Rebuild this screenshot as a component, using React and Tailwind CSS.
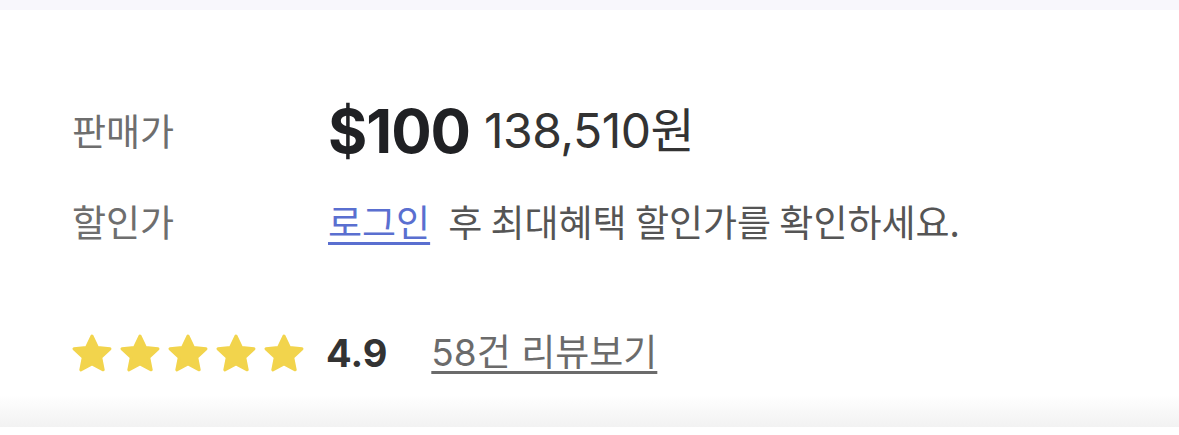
import React from "react";

const Star = () => (
  <svg width="40" height="38" viewBox="1.2 1.4 21.6 20.4" className="shrink-0">
    <path
      d="M12 2.4l2.95 6.15 6.75.8-4.95 4.65 1.3 6.7L12 17.45 5.95 20.7l1.3-6.7L2.3 9.35l6.75-.8z"
      fill="#F2D44C"
      stroke="#F2D44C"
      strokeWidth="1.6"
      strokeLinejoin="round"
    />
  </svg>
);

export default function App() {
  const kr = { fontFamily: '"Noto Sans CJK KR", "Noto Sans", sans-serif' };
  const num = { fontFamily: 'Inter, "Noto Sans CJK KR", sans-serif' };
  return (
    <div className="w-[1179px] h-[435px] bg-white flex flex-col overflow-hidden" style={kr}>
      <div className="h-[10px] bg-[#f8f7fc] shrink-0" />
      <div className="flex flex-col pl-[72px] pt-[91px]">
        <div className="flex items-center h-[60px]">
          <div className="w-[256px] text-[37px] text-[#6e6e6e]">판매가</div>
          <div className="flex items-center gap-[14px]" style={num}>
            <span className="text-[60px] font-bold text-[#202124] tracking-[-1px]">$100</span>
            <span className="text-[48px] text-[#333333] tracking-[-0.5px]">138,510원</span>
          </div>
        </div>
        <div className="flex items-center h-[60px] mt-[31px]">
          <div className="w-[256px] text-[37px] text-[#6e6e6e]">할인가</div>
          <div className="flex items-center text-[37px] text-[#555555]">
            <span className="text-[#5a6fd0] underline decoration-[3px] underline-offset-[5px]">로그인</span>
            <span className="ml-[18px]">후 최대혜택 할인가를 확인하세요.</span>
          </div>
        </div>
        <div className="flex items-center h-[60px] mt-[71px]">
          <div className="flex items-center gap-[8px]">
            <Star />
            <Star />
            <Star />
            <Star />
            <Star />
          </div>
          <span className="ml-[22px] text-[38px] font-bold text-[#333333]" style={num}>4.9</span>
          <span
            className="ml-[44px] text-[37px] text-[#6b6b6b] underline decoration-[3px] underline-offset-[5px]"
            style={num}
          >
            58건 리뷰보기
          </span>
        </div>
      </div>
      <div className="mt-auto h-[32px] bg-gradient-to-b from-white to-[#f2f2f2] shrink-0" />
      <div className="h-[8px] bg-white shrink-0" />
    </div>
  );
}
